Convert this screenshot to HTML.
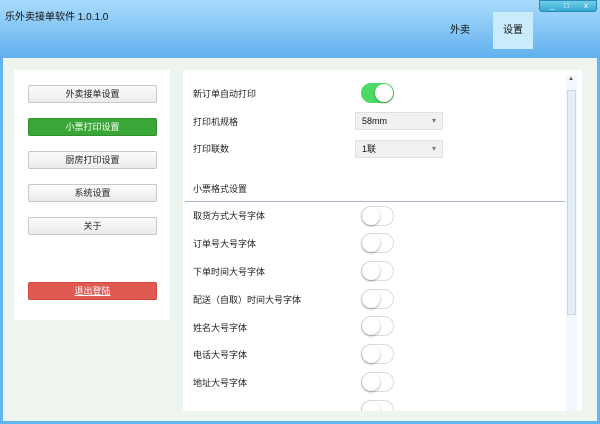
<!DOCTYPE html>
<html><head><meta charset="utf-8"><style>
*{margin:0;padding:0;box-sizing:border-box}
body{width:600px;height:424px;overflow:hidden;font-family:"Liberation Sans","Noto Sans CJK SC",sans-serif;font-size:9px;color:#333;background:#62b4f0;position:relative}
.top{position:absolute;left:0;top:0;width:600px;height:58px;background:linear-gradient(#a9dbfb,#8ccaf6 40%,#62b0ef)}
.title{position:absolute;left:5px;top:8px;font-size:10px;color:#111}
.ctrl{position:absolute;left:539px;top:0;width:58px;height:12px;background:linear-gradient(#6fd0e8,#3aa8d4);border:1px solid #2a8bb8;border-radius:0 0 3px 3px}
.ctrl span{position:absolute;top:0;color:#fff;font-size:8px}
.tab{position:absolute;top:12px;height:37px;line-height:37px;font-size:10px;color:#111;text-align:center;width:40px}
.main{position:absolute;left:3px;top:58px;width:594px;height:363px;background:#eef4ee}
.lp{position:absolute;left:14px;top:70px;width:156px;height:250px;background:#fff}
.btn{position:absolute;left:28px;width:129px;height:18px;border:1px solid #c8c8c8;border-radius:2px;background:linear-gradient(#fbfbfb,#ececec);text-align:center;line-height:16px;font-size:9px;color:#222}
.rp{position:absolute;left:183px;top:70px;width:399px;height:341px;background:#fff;overflow:hidden}
.lbl{position:absolute;left:10px;font-size:9px;color:#222}
.tg{position:absolute;left:178px;width:33px;height:20px;border-radius:10px;border:1px solid #ddd;background:#fff}
.tg::after{content:"";position:absolute;left:0;top:0;width:18px;height:18px;border-radius:50%;background:#fff;box-shadow:0 1px 2px rgba(0,0,0,.35)}
.tg.on{background:#4cd964;border-color:#4cd964}
.tg.on::after{left:13px}
.dd{position:absolute;left:172px;width:88px;height:18px;background:#f1f1f1;border:1px solid #e0e0e0;font-size:9px;line-height:16px;padding-left:6px;color:#111}
.dd::after{content:"▾";position:absolute;right:6px;top:0;color:#777;font-size:8px}
</style></head><body>
<div class="top"></div>
<div class="title">乐外卖接单软件 1.0.1.0</div>
<div class="ctrl"><span style="left:10px">_</span><span style="left:24px">□</span><span style="left:44px">x</span></div>
<div class="tab" style="left:440px">外卖</div>
<div class="tab" style="left:493px;background:#c9ecfd">设置</div>
<div class="main"></div>
<div class="lp"></div>
<div class="btn" style="top:85px">外卖接单设置</div>
<div class="btn" style="top:118px;background:#3aa637;border-color:#2f8e2d;color:#fff">小票打印设置</div>
<div class="btn" style="top:151px">厨房打印设置</div>
<div class="btn" style="top:184px">系统设置</div>
<div class="btn" style="top:217px">关于</div>
<div class="btn" style="top:282px;background:#e05a52;border-color:#d04a42;color:#fff;text-decoration:underline">退出登陆</div>
<div class="rp">
<div class="lbl" style="top:17px">新订单自动打印</div><div class="tg on" style="top:13px"></div>
<div class="lbl" style="top:45px">打印机规格</div><div class="dd" style="top:42px">58mm</div>
<div class="lbl" style="top:72px">打印联数</div><div class="dd" style="top:70px">1联</div>
<div class="lbl" style="top:112px">小票格式设置</div>
<div style="position:absolute;left:2px;top:131px;width:380px;height:1px;background:#a9b8c4"></div>
<div class="lbl" style="top:139px">取货方式大号字体</div><div class="tg" style="top:136px"></div>
<div class="lbl" style="top:167px">订单号大号字体</div><div class="tg" style="top:163px"></div>
<div class="lbl" style="top:195px">下单时间大号字体</div><div class="tg" style="top:191px"></div>
<div class="lbl" style="top:223px">配送（自取）时间大号字体</div><div class="tg" style="top:219px"></div>
<div class="lbl" style="top:251px">姓名大号字体</div><div class="tg" style="top:246px"></div>
<div class="lbl" style="top:278px">电话大号字体</div><div class="tg" style="top:274px"></div>
<div class="lbl" style="top:306px">地址大号字体</div><div class="tg" style="top:302px"></div>
<div class="tg" style="top:330px"></div>
<div style="position:absolute;left:383px;top:5px;width:11px;height:336px;background:#f3f6fa"></div>
<div style="position:absolute;left:384px;top:20px;width:9px;height:225px;background:#e4eef8;border:1px solid #c5d7ea"></div>
<div style="position:absolute;left:385px;top:6px;font-size:6px;color:#555">▲</div>
</div>
</body></html>
